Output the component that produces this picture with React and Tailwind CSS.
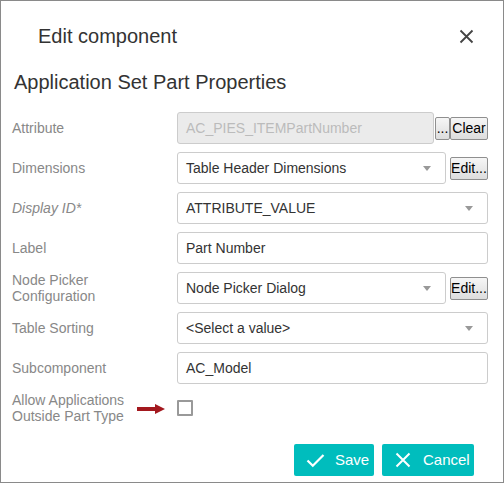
import React from 'react';

const Caret = () => (
  <span className="ml-auto mr-[14px] w-0 h-0 border-x-[4px] border-x-transparent border-t-[5px] border-t-[#999]" />
);

const Select = ({ value, className = '' }) => (
  <div className={`flex items-center h-[32px] border border-[#ccc] rounded-[3px] bg-white pl-[8px] text-[14px] text-[#333] ${className}`}>
    <span>{value}</span>
    <Caret />
  </div>
);

const TextInput = ({ value, disabled }) => (
  <div
    className={`flex items-center h-[32px] border border-[#ccc] rounded-[3px] pl-[8px] text-[14px] flex-1 ${
      disabled ? 'bg-[#ebebeb] text-[#bbb]' : 'bg-white text-[#333]'
    }`}
  >
    {value}
  </div>
);

const SmallButton = ({ children, className = '' }) => (
  <div className={`flex items-center justify-center h-[23px] border border-[#8f8f8f] rounded-[2px] bg-gradient-to-b from-[#f6f6f6] to-[#dddddd] text-[14px] text-black leading-none ${className}`}>
    {children}
  </div>
);

const Row = ({ label, italic, children }) => (
  <div className="flex items-center h-[32px]">
    <div className={`w-[165px] text-[14px] leading-[16px] text-[#888] ${italic ? 'italic' : ''}`}>{label}</div>
    <div className="flex-1 flex items-center">{children}</div>
  </div>
);

export default function App() {
  return (
    <div
      className="relative w-[504px] h-[483px] border border-[#8a8a8a] bg-white overflow-hidden"
      style={{ fontFamily: '"Liberation Sans", Arial, sans-serif' }}
    >
      {/* header */}
      <div className="flex items-center justify-between pt-[23px] pl-[37px] pr-[29px]">
        <div className="text-[20px] leading-[24px] text-[#333]">Edit component</div>
        <svg width="15" height="15" viewBox="0 0 15 15">
          <path d="M1.5 1.5 L13.5 13.5 M13.5 1.5 L1.5 13.5" stroke="#444" strokeWidth="1.8" fill="none" />
        </svg>
      </div>

      <div className="pl-[11px] pr-[15px]">
        <div className="mt-[22px] pl-[2px] text-[20px] leading-[24px] text-[#333]">Application Set Part Properties</div>

        <div className="mt-[18px] flex flex-col gap-[8px]">
          <Row label="Attribute">
            <TextInput value="AC_PIES_ITEMPartNumber" disabled />
            <SmallButton className="ml-[1px] w-[15px] text-[12px] items-end pb-[4px]">...</SmallButton>
            <SmallButton className="w-[38px]">Clear</SmallButton>
          </Row>
          <Row label="Dimensions">
            <Select value="Table Header Dimensions" className="flex-1" />
            <SmallButton className="ml-[4px] w-[38px] h-[22px]">Edit...</SmallButton>
          </Row>
          <Row label="Display ID*" italic>
            <Select value="ATTRIBUTE_VALUE" className="flex-1" />
          </Row>
          <Row label="Label">
            <TextInput value="Part Number" />
          </Row>
          <Row label={<>Node Picker<br />Configuration</>}>
            <Select value="Node Picker Dialog" className="flex-1" />
            <SmallButton className="ml-[4px] w-[38px] h-[22px]">Edit...</SmallButton>
          </Row>
          <Row label="Table Sorting">
            <Select value="<Select a value>" className="flex-1" />
          </Row>
          <Row label="Subcomponent">
            <TextInput value="AC_Model" />
          </Row>
          <Row label={<>Allow Applications<br />Outside Part Type</>}>
            <div className="w-[16px] h-[16px] border-2 border-[#999] rounded-[1px] bg-white" />
          </Row>
        </div>

        <div className="mt-[20px] flex justify-end gap-[8px] pr-[14px]">
          <div className="flex items-center h-[32px] w-[80px] rounded-[2px] bg-[#00bdbd] text-white text-[15px] pl-[12px]">
            <svg width="19" height="15" viewBox="0 0 19 15">
              <path d="M1.5 7.5 L6.8 12.8 L17.5 2" stroke="#fff" strokeWidth="2.2" fill="none" />
            </svg>
            <span className="ml-[10px]">Save</span>
          </div>
          <div className="flex items-center h-[32px] w-[92px] rounded-[2px] bg-[#00bdbd] text-white text-[15px] pl-[13px]">
            <svg width="16" height="16" viewBox="0 0 16 16">
              <path d="M1.5 1.5 L14.5 14.5 M14.5 1.5 L1.5 14.5" stroke="#fff" strokeWidth="2" fill="none" />
            </svg>
            <span className="ml-[12px]">Cancel</span>
          </div>
        </div>
      </div>

      {/* annotation arrow */}
      <svg className="absolute left-[136px] top-[402px]" width="29" height="12" viewBox="0 0 29 12">
        <path d="M0 6 L19 6" stroke="#a3181e" strokeWidth="4" />
        <path d="M18 1 L28 6 L18 11 Z" fill="#a3181e" />
      </svg>
    </div>
  );
}
